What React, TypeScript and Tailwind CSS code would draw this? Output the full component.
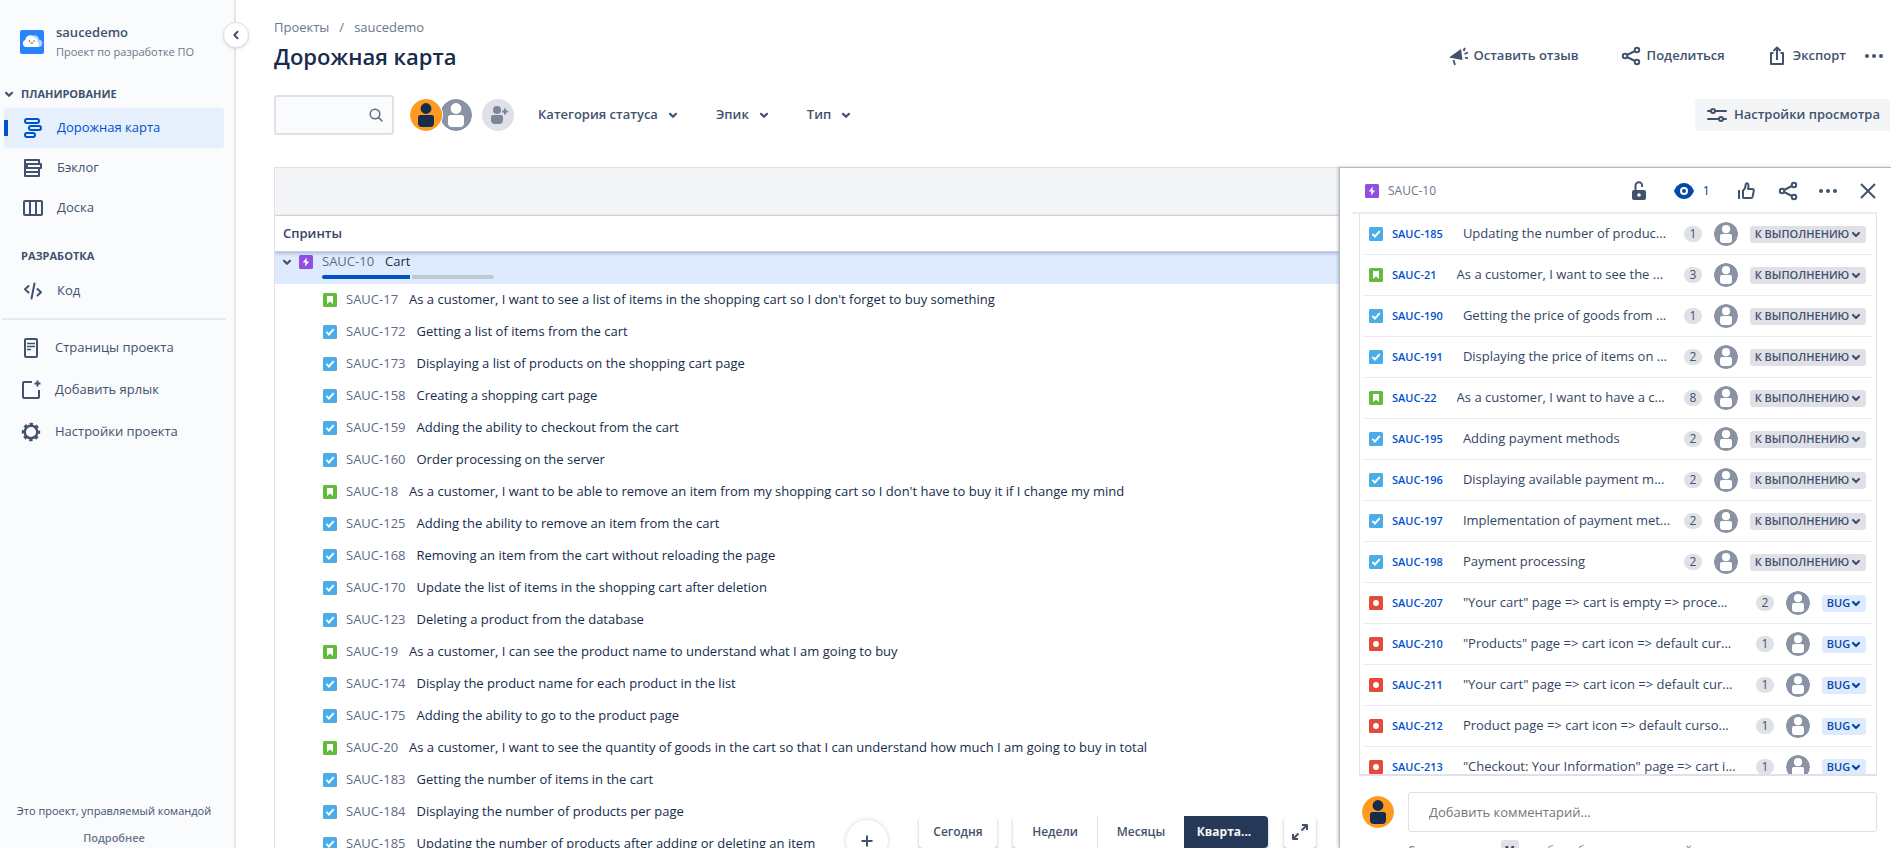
import React from "react";

type Kind = "task" | "story" | "bug" | "epic";

const roadmap: [Kind, string, string][] = [
  ["story", "SAUC-17", "As a customer, I want to see a list of items in the shopping cart so I don't forget to buy something"],
  ["task", "SAUC-172", "Getting a list of items from the cart"],
  ["task", "SAUC-173", "Displaying a list of products on the shopping cart page"],
  ["task", "SAUC-158", "Creating a shopping cart page"],
  ["task", "SAUC-159", "Adding the ability to checkout from the cart"],
  ["task", "SAUC-160", "Order processing on the server"],
  ["story", "SAUC-18", "As a customer, I want to be able to remove an item from my shopping cart so I don't have to buy it if I change my mind"],
  ["task", "SAUC-125", "Adding the ability to remove an item from the cart"],
  ["task", "SAUC-168", "Removing an item from the cart without reloading the page"],
  ["task", "SAUC-170", "Update the list of items in the shopping cart after deletion"],
  ["task", "SAUC-123", "Deleting a product from the database"],
  ["story", "SAUC-19", "As a customer, I can see the product name to understand what I am going to buy"],
  ["task", "SAUC-174", "Display the product name for each product in the list"],
  ["task", "SAUC-175", "Adding the ability to go to the product page"],
  ["story", "SAUC-20", "As a customer, I want to see the quantity of goods in the cart so that I can understand how much I am going to buy in total"],
  ["task", "SAUC-183", "Getting the number of items in the cart"],
  ["task", "SAUC-184", "Displaying the number of products per page"],
  ["task", "SAUC-185", "Updating the number of products after adding or deleting an item"],
];

const children: [Kind, string, string, number][] = [
  ["task", "SAUC-185", "Updating the number of produc...", 1],
  ["story", "SAUC-21", "As a customer, I want to see the ...", 3],
  ["task", "SAUC-190", "Getting the price of goods from ...", 1],
  ["task", "SAUC-191", "Displaying the price of items on ...", 2],
  ["story", "SAUC-22", "As a customer, I want to have a c...", 8],
  ["task", "SAUC-195", "Adding payment methods", 2],
  ["task", "SAUC-196", "Displaying available payment m...", 2],
  ["task", "SAUC-197", "Implementation of payment met...", 2],
  ["task", "SAUC-198", "Payment processing", 2],
  ["bug", "SAUC-207", "\"Your cart\" page => cart is empty => proce...", 2],
  ["bug", "SAUC-210", "\"Products\" page => cart icon => default cur...", 1],
  ["bug", "SAUC-211", "\"Your cart\" page => cart icon => default cur...", 1],
  ["bug", "SAUC-212", "Product page => cart icon => default curso...", 1],
  ["bug", "SAUC-213", "\"Checkout: Your Information\" page => cart i...", 1],
];

function Icon({ children, className = "" }: { children: React.ReactNode; className?: string }) {
  return (
    <svg viewBox="0 0 24 24" className={`size-6 shrink-0 ${className}`} fill="none" stroke="currentColor" strokeWidth="2" strokeLinejoin="round" aria-hidden="true">
      {children}
    </svg>
  );
}

const Chevron = ({ className = "size-6" }: { className?: string }) => (
  <svg viewBox="0 0 24 24" className={`shrink-0 ${className}`} fill="none" stroke="currentColor" strokeWidth="2.2" strokeLinecap="round" strokeLinejoin="round" aria-hidden="true">
    <path d="M9 10.8l3 3 3-3" />
  </svg>
);
const SmallChevron = () => (
  <svg viewBox="0 0 10 10" className="size-[10px] shrink-0" fill="none" stroke="currentColor" strokeWidth="2.2" strokeLinecap="round" strokeLinejoin="round" aria-hidden="true">
    <path d="M2 4l3 3 3-3" />
  </svg>
);
const Dots = () => (
  <Icon>
    <g fill="currentColor" stroke="none"><circle cx="5" cy="12" r="2" /><circle cx="12" cy="12" r="2" /><circle cx="19" cy="12" r="2" /></g>
  </Icon>
);
const Share = () => (
  <Icon>
    <circle cx="6" cy="12" r="2.2" /><circle cx="18" cy="6" r="2.2" /><circle cx="18" cy="18" r="2.2" />
    <path d="M8 11l8-4M8 13l8 4" />
  </Icon>
);

const typeColors: Record<Kind, string> = { task: "#4bade8", story: "#63ba3c", bug: "#e5493a", epic: "#904ee2" };
function TypeIcon({ kind }: { kind: Kind }) {
  return (
    <svg viewBox="0 0 14 14" className="size-[14px] shrink-0" aria-hidden="true">
      <rect width="14" height="14" rx="1.5" fill={typeColors[kind]} />
      {kind === "task" && <path d="M3.8 7.4l2.1 2.1 4.4-4.9" fill="none" stroke="#fff" strokeWidth="1.9" strokeLinecap="round" />}
      {kind === "story" && <path d="M4 3h6v8L7 8.4 4 11z" fill="#fff" />}
      {kind === "bug" && <circle cx="7" cy="7" r="2.9" fill="#fff" />}
      {kind === "epic" && <path d="M7.8 2.6L3.8 7.6h2.6l-.4 3.9 4.2-5.1H7.5z" fill="#fff" />}
    </svg>
  );
}

function Avatar({ orange = false, className }: { orange?: boolean; className: string }) {
  const fg = orange ? "#172b4d" : "#fff";
  return (
    <svg viewBox="0 0 32 32" className={`shrink-0 rounded-full ${className}`} aria-hidden="true">
      <circle cx="16" cy="16" r="16" fill={orange ? "#ff991f" : "#8993a4"} />
      <circle cx="16" cy="9.5" r="5.4" fill={fg} />
      <path d="M8 18.5a2.5 2.5 0 012.500-2.500h11a2.500 2.500 0 012.500 2.500V24a4 4 0 01-4 4h-8a4 4 0 01-4-4z" fill={fg} />
    </svg>
  );
}

function NavItem({ icon, label, active = false }: { icon: React.ReactNode; label: string; active?: boolean }) {
  return (
    <a href="#" className={`relative mx-1 flex h-10 w-[220px] items-center gap-3 rounded pl-[17px] ${active ? "bg-[#e6effc] text-[#0052cc]" : "text-[#42526e]"}`}>
      {active && <span className="absolute left-0 h-4 w-1 bg-[#0052cc]" />}
      {icon}
      <span>{label}</span>
    </a>
  );
}

function Sidebar() {
  return (
    <aside className="relative z-20 flex w-[236px] shrink-0 flex-col border-r-2 border-[#e4e6ea] bg-[#fafbfc] text-[#42526e]">
      <button aria-label="Свернуть боковую панель" className="absolute top-[22px] -right-[15px] flex size-[26px] items-center justify-center rounded-full border border-[#dfe1e6] bg-white shadow-sm">
        <svg viewBox="0 0 10 10" className="size-[10px]" fill="none" stroke="currentColor" strokeWidth="2" strokeLinecap="round" strokeLinejoin="round"><path d="M6.500 1.800L3.300 5l3.200 3.200" /></svg>
      </button>
      <div className="flex items-center gap-3 pt-[22px] pl-5">
        <svg viewBox="0 0 24 24" className="size-6 shrink-0" aria-hidden="true">
          <rect width="24" height="24" rx="2" fill="#2684ff" />
          <path d="M13 5.500a4.500 4.500 0 016 4 3.800 3.800 0 01.2 7.500H13z" fill="#b3d4ff" />
          <path d="M6 17a3.600 3.600 0 01-.6-7A4.900 4.900 0 0114.500 7.800a3.800 3.800 0 013 4.500 2.500 2.500 0 010 4.700z" fill="#fff" />
          <circle cx="9.400" cy="11" r=".7" fill="#344563" /><circle cx="14" cy="11" r=".7" fill="#344563" />
          <path d="M10.300 12.300h3a1.500 1.500 0 01-3 0z" fill="#ff5630" />
        </svg>
        <div>
          <p className="leading-5 font-semibold">saucedemo</p>
          <p className="text-[11px] leading-5 text-[#6b778c]">Проект по разработке ПО</p>
        </div>
      </div>
      <h2 className="mt-[18px] flex h-7 items-center text-[11px] font-bold">
        <Chevron className="-ml-[3px] size-6" />ПЛАНИРОВАНИЕ
      </h2>
      <nav>
        <NavItem active label="Дорожная карта" icon={<Icon><rect x="4" y="3" width="14" height="4" rx="2" /><rect x="8" y="10" width="12" height="4" rx="2" /><rect x="4" y="17" width="10" height="4" rx="2" /></Icon>} />
        <NavItem label="Бэклог" icon={<Icon><path d="M4 4h14v4H4zM6 8h14v4H6zM4 12h14v4H4zM4 16h14v4H4zM4 8v4" /></Icon>} />
        <NavItem label="Доска" icon={<Icon><rect x="3" y="5" width="18" height="14" rx="1" /><path d="M9 5v14M15 5v14" /></Icon>} />
      </nav>
      <h2 className="mt-[13px] flex h-[30px] items-center pl-[21px] text-[11px] font-bold">РАЗРАБОТКА</h2>
      <NavItem label="Код" icon={<Icon><path d="M7.500 7L4 10.300 7.500 13.500M16.500 10L20 13.300 16.500 16.500M13.500 4.500l-3 15" strokeLinecap="round" /></Icon>} />
      <hr className="mt-[7px] mr-2 ml-0.5 border-0 border-t-2 border-[#e6e8ec]" />
      <nav className="mt-[7px]">
        {[
          ["Страницы проекта", <Icon key="p"><rect x="6" y="3" width="12" height="18" rx="1" /><path d="M8 7.500h8M8 10.500h8M8 13.500h4" strokeWidth="1.600" /></Icon>],
          ["Добавить ярлык", <Icon key="a"><path d="M13 4H5a1 1 0 00-1 1v14a1 1 0 001 1h14a1 1 0 001-1v-7M18.500 2.500v6M15.500 5.500h6" /></Icon>],
          ["Настройки проекта", <Icon key="s"><circle cx="12" cy="12" r="6.300" strokeWidth="2.400" /><circle cx="12" cy="12" r="7.800" strokeWidth="2.800" strokeDasharray="3.300 2.826" strokeDashoffset="1.600" /></Icon>],
        ].map(([label, icon]) => (
          <a key={label as string} href="#" className="flex h-[42px] items-center gap-3 pl-[19px]">{icon}<span>{label}</span></a>
        ))}
      </nav>
      <div className="mt-auto w-[228px] pb-px text-center text-[11px]">
        <p className="h-7 leading-7">Это проект, управляемый командой</p>
        <a href="#" className="mt-1 block h-[18px] leading-[18px] font-semibold text-[#6b778c]">Подробнее</a>
      </div>
    </aside>
  );
}

function RoadmapList() {
  return (
    <section className="relative min-w-0 flex-1 overflow-hidden border-t border-l border-[#dfe1e6]">
      <div className="h-12 border-b border-[#dfe1e6] bg-[#f4f5f7]" />
      <div className="relative z-10 flex h-9 items-center border-b border-[#c9d3e4] bg-white pl-2 font-semibold text-[#344563] shadow-[0_1px_4px_rgba(9,30,66,0.3)]">Спринты</div>
      <div className="flex h-8 bg-[#deebff]">
        <div className="flex h-5 items-center">
          <button aria-label="Свернуть эпик" className="text-[#42526e]"><Chevron /></button>
          <TypeIcon kind="epic" />
        </div>
        <div className="ml-[9px]">
          <p className="flex h-5 items-center gap-[11px]"><a href="#" className="text-[#5e6c84]">SAUC-10</a><span>Cart</span></p>
          <div className="mt-[3px] flex h-1 w-[172px] gap-0.5 overflow-hidden rounded-sm">
            <span className="w-[88px] bg-[#0052cc]" /><span className="flex-1 bg-[#c1c7d0]" />
          </div>
        </div>
      </div>
      <ul>
        {roadmap.map(([kind, key, title]) => (
          <li key={key} className="flex h-8 items-center pl-12 whitespace-nowrap">
            <TypeIcon kind={kind} />
            <a href="#" className="ml-[9px] text-[#5e6c84]">{key}</a>
            <span className="ml-[11px]">{title}</span>
          </li>
        ))}
      </ul>
      <div className="absolute right-[23px] bottom-0 flex items-start gap-4 text-[12px] font-semibold text-[#42526e]">
        <button aria-label="Создать" className="mt-1 mr-[15px] -mb-4 flex size-[42px] items-center justify-center rounded-full bg-white shadow-[0_0_4px_rgba(9,30,66,0.2)]">
          <Icon><path d="M12 6.500v11M6.500 12h11" /></Icon>
        </button>
        <button className="h-8 w-[78px] rounded bg-white shadow-[0_2px_3px_rgba(9,30,66,0.3)]">Сегодня</button>
        <div className="flex h-8 overflow-hidden rounded bg-white shadow-[0_2px_3px_rgba(9,30,66,0.3)]">
          <button className="w-[85px] border-r border-[#dfe1e6]">Недели</button>
          <button className="w-[86px]">Месяцы</button>
          <button className="w-[84px] bg-[#253858] pr-1 font-bold text-[#f4f5f7]">Кварта...</button>
        </div>
        <button aria-label="Во весь экран" className="flex size-8 items-center justify-center rounded bg-white shadow-[0_2px_3px_rgba(9,30,66,0.3)]">
          <Icon><path d="M14 5h5v5M10 19H5v-5M19 5l-5.500 5.500M5 19l5.500-5.500" /></Icon>
        </button>
      </div>
    </section>
  );
}

function DetailPanel() {
  return (
    <section className="z-10 flex w-[552px] shrink-0 flex-col border-t border-l border-[#b3b7bf] bg-white shadow-[-1px_0_3px_rgba(9,30,66,0.25)]">
      <header className="mr-[14px] ml-3 flex h-[46px] shrink-0 items-center border-b-2 border-[#ebecf0] pt-0.5 pl-[13px] text-[#42526e]">
        <TypeIcon kind="epic" />
        <a href="#" className="ml-[9px] text-[12px] text-[#6b778c]">SAUC-10</a>
        <div className="-mr-[3px] ml-auto flex items-center gap-4">
          <button aria-label="Ограничения"><Icon><rect x="5" y="11" width="14" height="10" rx="2" fill="currentColor" stroke="none" /><path d="M8.500 11V6.500a3.300 3.300 0 016.600 0V8" /><circle cx="12" cy="16" r="1.800" fill="#fff" stroke="none" /></Icon></button>
          <button className="mr-2 ml-[5px] flex items-center gap-[7px] text-[#0747a6]">
            <Icon><path d="M2 12c2-5 5.500-8 10-8s8 3 10 8c-2 5-5.500 8-10 8S4 17 2 12z" fill="currentColor" stroke="none" /><circle cx="12" cy="12" r="3" stroke="#fff" /></Icon>1
          </button>
          <button aria-label="Нравится" className="mr-0.5"><Icon><path d="M5 11v9M9 11.500c2-1.500 2.600-3.500 2.600-5.500 0-2.400 2.900-2.200 2.900.8 0 1.500-.4 2.700-.4 3.200h4.200c1 0 1.700.8 1.500 1.700l-1.200 6c-.2.800-.8 1.300-1.600 1.300H9.800a.8.800 0 01-.8-.8z" /></Icon></button>
          <button aria-label="Поделиться"><Share /></button>
          <button aria-label="Ещё"><Dots /></button>
          <button aria-label="Закрыть"><Icon><path d="M5 5l14 14M19 5L5 19" /></Icon></button>
        </div>
      </header>
      <ul className="mr-[14px] ml-[19px] min-h-0 flex-1 overflow-hidden border-x border-b-2 border-[#dfe1e6] px-[3px]">
        {children.map(([kind, key, title, points]) => (
          <li key={key} className="flex h-[41px] items-center border-b border-[#ebecf0] pr-[7px] pl-1.5 whitespace-nowrap">
            <TypeIcon kind={kind} />
            <a href="#" className="ml-[9px] text-[11px] font-semibold text-[#0052cc]">{key}</a>
            <span className="ml-5 min-w-0 flex-1 overflow-hidden text-[#344563]">{title}</span>
            <span className="ml-2 flex h-4 w-[18px] shrink-0 items-center justify-center rounded-full bg-[#dfe1e6] text-[12px] text-[#42526e]">{points}</span>
            <Avatar className="mx-3 size-6" />
            {kind === "bug" ? (
              <button className="flex h-[17px] w-11 items-center justify-center gap-px rounded-[3px] bg-[#deebff] text-[11px] font-semibold text-[#0747a6]">BUG<SmallChevron /></button>
            ) : (
              <button className="flex h-[17px] w-[116px] items-center justify-center gap-0.5 rounded-[3px] bg-[#dfe1e6] text-[11px] font-semibold text-[#42526e]">К ВЫПОЛНЕНИЮ<SmallChevron /></button>
            )}
          </li>
        ))}
      </ul>
      <footer className="mr-[14px] ml-[22px] flex h-[72px] shrink-0 gap-[14px] overflow-hidden pt-4">
        <Avatar orange className="mt-1 size-8" />
        <div className="min-w-0 flex-1">
          <input aria-label="Комментарий" placeholder="Добавить комментарий..." className="h-10 w-full rounded-[3px] border border-[#dfe1e6] px-5 placeholder:text-[#757575]" />
          <p className="mt-2 text-[11px] leading-5 text-[#6b778c]">
            <strong className="font-semibold">Совет:</strong> нажмите <kbd className="mx-1 inline-block rounded-[3px] bg-[#dfe1e6] px-1 font-['Open_Sans',sans-serif] font-bold text-[#344563]">M</kbd>, чтобы добавить комментарий
          </p>
        </div>
      </footer>
    </section>
  );
}

export default function App() {
  return (
    <div className="flex h-screen overflow-hidden bg-white font-['Open_Sans',sans-serif] text-[13px] text-[#172b4d]">
      <Sidebar />
      <main className="flex min-w-0 flex-1 flex-col pt-[18px] pl-[38px]">
        <nav className="flex h-5 items-center gap-[10px] text-[#6b778c]">
          <a href="#">Проекты</a><span>/</span><a href="#">saucedemo</a>
        </nav>
        <div className="flex h-9 items-center justify-between pr-[5px]">
          <h1 className="text-[22px] font-semibold">Дорожная карта</h1>
          <div className="flex items-center gap-10 font-semibold text-[#42526e]">
            <button className="flex items-center gap-1">
              <Icon><path d="M3 13.500L15 5l1.500 11z" fill="currentColor" stroke="none" /><path d="M7.500 16l1.500 5M17.500 7l1.500-3M18.500 10l3.500-1.500M19 13.500l3 .8" strokeWidth="1.800" /></Icon>Оставить отзыв
            </button>
            <button className="flex items-center gap-1"><Share />Поделиться</button>
            <div className="flex items-center gap-4">
              <button className="flex items-center gap-1"><Icon><path d="M8.500 9H6v11h12V9h-2.500M12 16V4M8.500 7L12 3.500 15.500 7" /></Icon>Экспорт</button>
              <button aria-label="Ещё"><Dots /></button>
            </div>
          </div>
        </div>
        <div className="mt-[21px] flex h-10 items-center pr-px font-semibold text-[#42526e]">
          <label className="flex h-10 w-[120px] items-center rounded-[3px] border-2 border-[#dfe1e6] bg-[#fafbfc] pr-2">
            <input aria-label="Поиск" className="w-full min-w-0 flex-1 bg-transparent pl-2 outline-none" />
            <svg viewBox="0 0 16 16" className="size-4 shrink-0" fill="none" stroke="#5e6c84" strokeWidth="1.500" strokeLinecap="round"><circle cx="7" cy="7" r="4.800" /><path d="M10.600 10.600L14 14" /></svg>
          </label>
          <Avatar orange className="z-10 ml-4 size-8 ring-1 ring-white" />
          <Avatar className="-ml-0.5 size-8" />
          <button aria-label="Добавить людей" className="ml-[10px] flex size-8 items-center justify-center rounded-full bg-[#dfe1e6] text-[#7a869a]">
            <Icon><g fill="currentColor" stroke="none"><circle cx="11" cy="7" r="4" /><path d="M5 14a2 2 0 012-2h8a2 2 0 012 2v3a4 4 0 01-4 4H9a4 4 0 01-4-4z" /></g><path d="M19 5.500v6M16 8.500h6" /></Icon>
          </button>
          <div className="ml-6 flex gap-[31px]">
            <button className="flex items-center gap-[3px]">Категория статуса<Chevron /></button>
            <button className="flex items-center gap-[3px]">Эпик<Chevron /></button>
            <button className="flex items-center gap-[3px]">Тип<Chevron /></button>
          </div>
          <button className="ml-auto flex h-8 items-center gap-[5px] rounded-[3px] bg-[#f4f5f7] px-[10px]">
            <Icon><path d="M3 8h2.500M10.500 8H21M3 16h10.500M18.500 16H21" strokeLinecap="round" /><circle cx="8" cy="8" r="2" /><circle cx="16" cy="16" r="2" /></Icon>Настройки просмотра
          </button>
        </div>
        <div className="mt-8 flex min-h-0 flex-1">
          <RoadmapList />
          <DetailPanel />
        </div>
      </main>
    </div>
  );
}
